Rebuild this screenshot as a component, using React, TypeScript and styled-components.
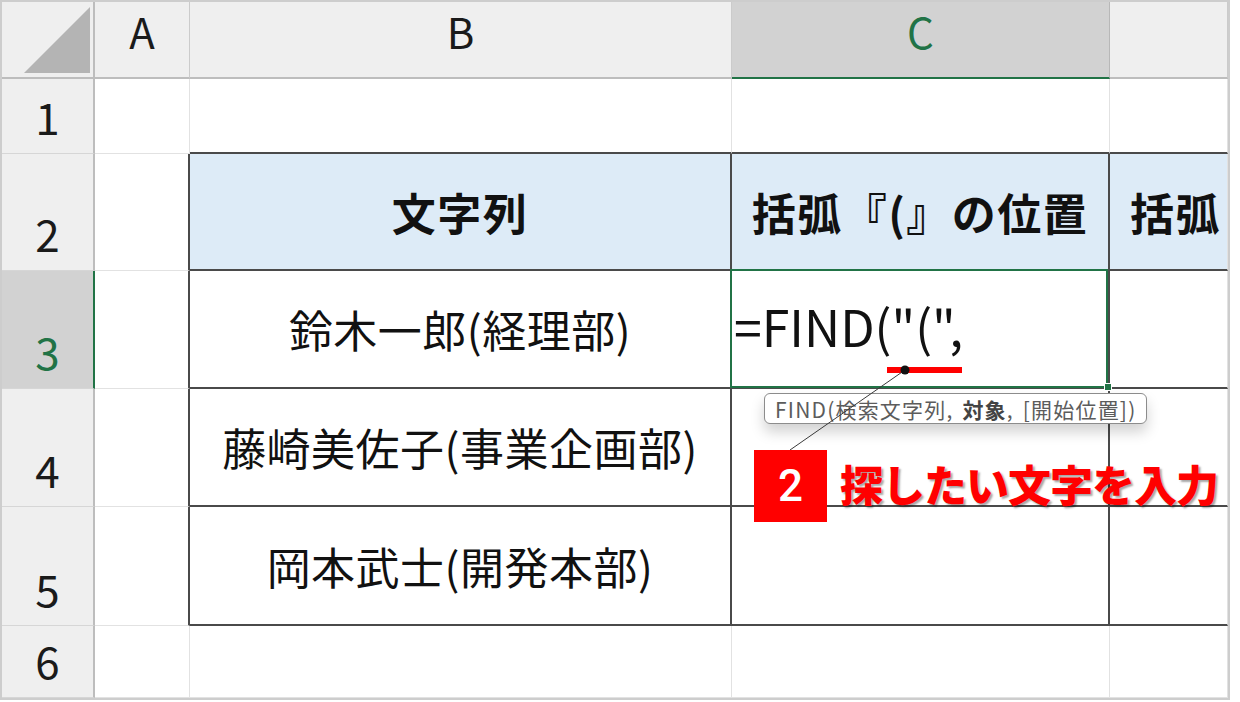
import styled, { createGlobalStyle } from "styled-components";

const GlobalStyle = createGlobalStyle`
  body {
    margin: 0;
    background: #ffffff;
    font-family: "Noto Sans CJK JP", "Noto Sans", sans-serif;
  }
`;

const JP = `"Noto Sans CJK JP", "Noto Sans", sans-serif`;
const GREEN = "#217346";
const DARK = "#4a4a4a";
const GRID = "#e2e2e2";
const HEAD_LINE = "#bdbdbd";

const Page = styled.div`
  position: relative;
  width: 1240px;
  height: 702px;
`;

const Sheet = styled.div`
  width: 1230px;
  height: 700px;
  box-sizing: border-box;
  border: 2px solid #cdcdcd;
  display: grid;
  grid-template-columns: 93px 95px 542px 378px 118px;
  grid-template-rows: 77px 75px 117px 118px 118px 119px 72px;
  overflow: hidden;
  font-family: ${JP};
`;

const Corner = styled.div`
  background: #efefef;
  border-right: 2px solid ${HEAD_LINE};
  border-bottom: 2px solid ${HEAD_LINE};
  display: flex;
  justify-content: flex-end;
  align-items: flex-end;
  padding: 0 3px 4px 0;
  box-sizing: border-box;
`;

const CornerMark = styled.div`
  width: 66px;
  height: 66px;
  background: #b4b4b4;
  clip-path: polygon(100% 0, 100% 100%, 0 100%);
`;

const ColHead = styled.div<{ $sel?: boolean }>`
  background: ${(p) => (p.$sel ? "#d2d2d2" : "#efefef")};
  color: ${(p) => (p.$sel ? GREEN : "#1a1a1a")};
  border-right: 1px solid ${(p) => (p.$sel ? "#b8b8b8" : "#cbcbcb")};
  border-bottom: 2px solid ${(p) => (p.$sel ? GREEN : HEAD_LINE)};
  box-sizing: border-box;
  display: flex;
  justify-content: center;
  align-items: center;
  padding-bottom: 16px;
  font-size: 42px;
  line-height: 1.2;
`;

const RowHead = styled.div<{ $sel?: boolean }>`
  background: ${(p) => (p.$sel ? "#d2d2d2" : "#efefef")};
  color: ${(p) => (p.$sel ? GREEN : "#1a1a1a")};
  border-right: 2px solid ${(p) => (p.$sel ? GREEN : HEAD_LINE)};
  border-bottom: 1px solid #d6d6d6;
  box-sizing: border-box;
  display: flex;
  justify-content: center;
  align-items: flex-end;
  padding-bottom: 10px;
  font-size: 44px;
  line-height: 1.2;
`;

const Cell = styled.div<{
  $head?: boolean;
  $right?: boolean;
  $bottom?: boolean;
  $align?: string;
}>`
  position: relative;
  background: ${(p) => (p.$head ? "#ddebf7" : "#ffffff")};
  border-right: ${(p) => (p.$right ? `2px solid ${DARK}` : `1px solid ${GRID}`)};
  border-bottom: ${(p) => (p.$bottom ? `2px solid ${DARK}` : `1px solid ${GRID}`)};
  box-sizing: border-box;
  display: flex;
  align-items: center;
  justify-content: ${(p) => p.$align || "center"};
  font-size: 44px;
  font-weight: ${(p) => (p.$head ? 700 : 400)};
  letter-spacing: ${(p) => (p.$head ? "1.5px" : "0.5px")};
  color: #111;
  white-space: nowrap;
  overflow: ${(p) => (p.$head ? "hidden" : "visible")};
  padding-left: ${(p) => (p.$align === "flex-start" ? "20px" : "0")};
`;

const ActiveCell = styled(Cell)`
  padding-left: 2px;
  font-size: 50px;
  letter-spacing: 0;
  padding-bottom: 8px;
  &::after {
    content: "";
    position: absolute;
    left: -2px;
    top: -2px;
    right: 0;
    bottom: -1px;
    border: 2px solid ${GREEN};
    pointer-events: none;
  }
  &::before {
    content: "";
    position: absolute;
    right: -4px;
    bottom: -4px;
    width: 6px;
    height: 6px;
    background: ${GREEN};
    border: 1px solid #fff;
    z-index: 2;
  }
`;

const Tooltip = styled.div`
  position: absolute;
  left: 764px;
  top: 393px;
  height: 31px;
  box-sizing: border-box;
  padding: 0 10px;
  display: flex;
  align-items: center;
  background: #fff;
  border: 1.5px solid #8c8c8c;
  border-radius: 6px;
  box-shadow: 0 8px 14px rgba(0, 0, 0, 0.18);
  font-family: ${JP};
  font-size: 21px;
  letter-spacing: 1.2px;
  word-spacing: 3px;
  color: #5c5c5c;
  white-space: pre;
  b {
    color: #444;
    font-weight: 700;
  }
`;

const Leader = styled.svg`
  position: absolute;
  left: 780px;
  top: 360px;
  overflow: visible;
`;

const Annotation = styled.div`
  position: absolute;
  left: 754px;
  top: 450px;
  display: flex;
  align-items: center;
  gap: 13px;
`;

const Badge = styled.div`
  width: 73px;
  height: 72px;
  background: #ff0000;
  color: #fff;
  display: flex;
  align-items: center;
  justify-content: center;
  font-family: Roboto, "Liberation Sans", sans-serif;
  font-size: 44px;
  font-weight: 500;
`;

const Label = styled.span`
  font-family: ${JP};
  font-size: 43px;
  font-weight: 900;
  color: #ff0000;
  letter-spacing: -1px;
  text-shadow: 2px 2px 2px rgba(0, 0, 0, 0.35);
  padding-bottom: 6px;
`;

const rowNums = ["1", "2", "3", "4", "5", "6"];

const names = ["鈴木一郎(経理部)", "藤崎美佐子(事業企画部)", "岡本武士(開発本部)"];

export default function App() {
  return (
    <Page>
      <GlobalStyle />
      <Sheet>
        <Corner>
          <CornerMark />
        </Corner>
        <ColHead>A</ColHead>
        <ColHead>B</ColHead>
        <ColHead $sel>C</ColHead>
        <ColHead />

        {/* row 1 */}
        <RowHead>{rowNums[0]}</RowHead>
        <Cell />
        <Cell $bottom />
        <Cell $bottom />
        <Cell $bottom />

        {/* row 2 - table header */}
        <RowHead>{rowNums[1]}</RowHead>
        <Cell $right />
        <Cell $head $right $bottom>文字列</Cell>
        <Cell $head $right $bottom>括弧『(』の位置</Cell>
        <Cell $head $bottom $align="flex-start">括弧</Cell>

        {/* row 3 - active */}
        <RowHead $sel>{rowNums[2]}</RowHead>
        <Cell $right />
        <Cell $right $bottom>{names[0]}</Cell>
        <ActiveCell $right $bottom $align="flex-start">=FIND("(",</ActiveCell>
        <Cell $bottom />

        {/* row 4 */}
        <RowHead>{rowNums[3]}</RowHead>
        <Cell $right />
        <Cell $right $bottom>{names[1]}</Cell>
        <Cell $right $bottom />
        <Cell $bottom />

        {/* row 5 */}
        <RowHead>{rowNums[4]}</RowHead>
        <Cell $right />
        <Cell $right $bottom>{names[2]}</Cell>
        <Cell $right $bottom />
        <Cell $bottom />

        {/* row 6 */}
        <RowHead>{rowNums[5]}</RowHead>
        <Cell />
        <Cell />
        <Cell />
        <Cell />
      </Sheet>

      <Tooltip>
        FIND(検索文字列, <b>対象</b>, [開始位置])
      </Tooltip>

      <Leader width="190" height="100" viewBox="0 0 190 100">
        <rect x="107" y="7" width="75" height="6" fill="#ff0000" />
        <line x1="125" y1="10" x2="10" y2="90" stroke="#3a3a3a" strokeWidth="1" />
        <circle cx="125" cy="10" r="4.5" fill="#111" />
      </Leader>

      <Annotation>
        <Badge>2</Badge>
        <Label>探したい文字を入力</Label>
      </Annotation>
    </Page>
  );
}
